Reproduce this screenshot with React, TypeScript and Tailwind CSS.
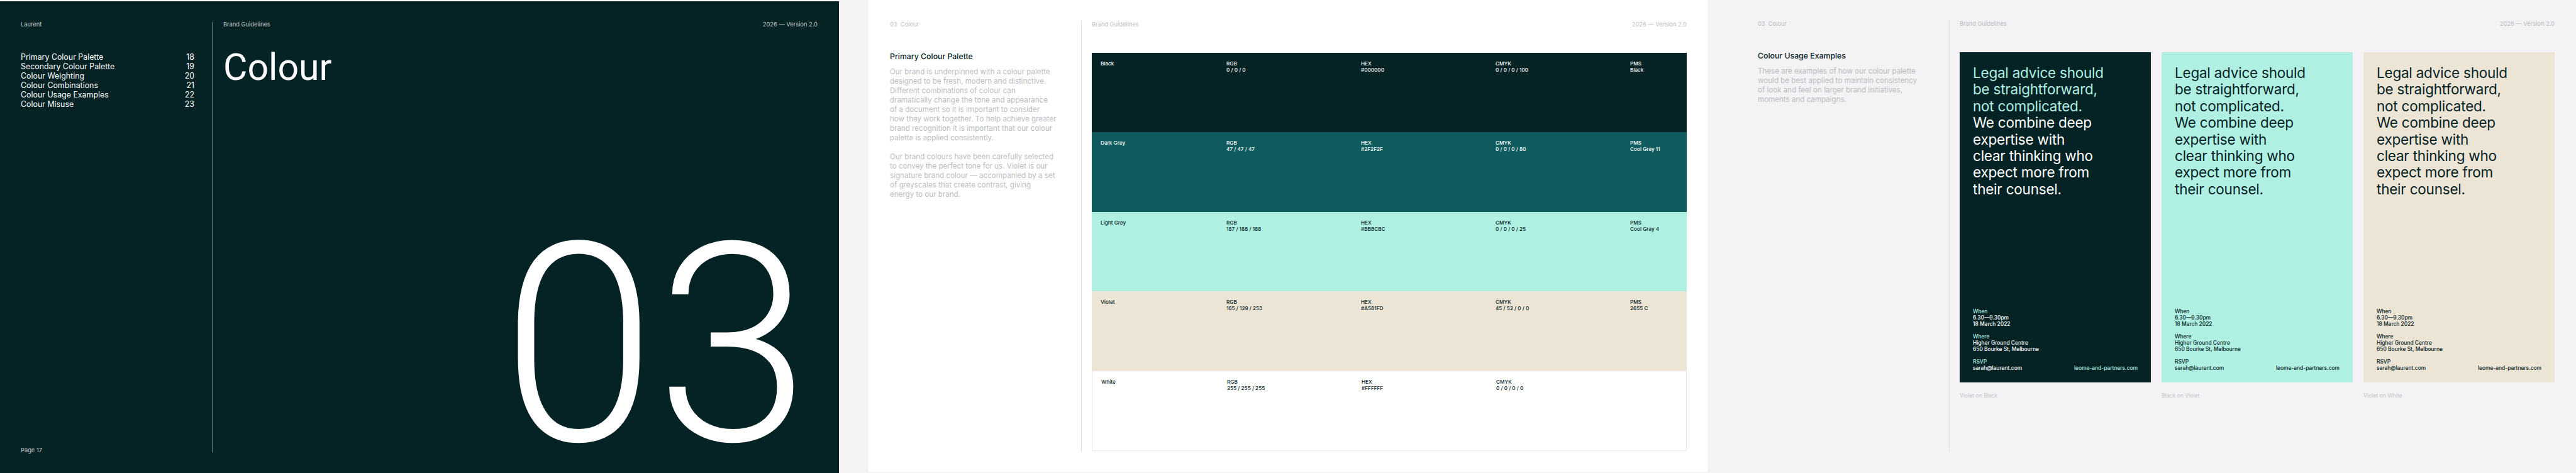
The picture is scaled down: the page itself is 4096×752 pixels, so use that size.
const swatches = [
  { name: 'Black', rgb: '0 / 0 / 0', hex: '#000000', cmyk: '0 / 0 / 0 / 100', pms: 'Black', row: 'bg-[#052225] text-white' },
  { name: 'Dark Grey', rgb: '47 / 47 / 47', hex: '#2F2F2F', cmyk: '0 / 0 / 0 / 80', pms: 'Cool Gray 11', row: 'bg-[#0f5b5d] text-white' },
  { name: 'Light Grey', rgb: '187 / 188 / 188', hex: '#BBBCBC', cmyk: '0 / 0 / 0 / 25', pms: 'Cool Gray 4', row: 'bg-[#aff0e3] text-[#052225]' },
  { name: 'Violet', rgb: '165 / 129 / 253', hex: '#A581FD', cmyk: '45 / 52 / 0 / 0', pms: '2655 C', row: 'bg-[#ece4d4] text-[#052225]' },
  { name: 'White', rgb: '255 / 255 / 255', hex: '#FFFFFF', cmyk: '0 / 0 / 0 / 0', pms: '', row: 'bg-white text-[#052225] border border-t-0 border-[#e8e6ea]' },
];

const contents = [
  ['Primary Colour Palette', '18'],
  ['Secondary Colour Palette', '19'],
  ['Colour Weighting', '20'],
  ['Colour Combinations', '21'],
  ['Colour Usage Examples', '22'],
  ['Colour Misuse', '23'],
];

const cards = [
  { bg: 'bg-[#052225] text-white', accent: 'text-[#aff0e3]', caption: 'Violet on Black' },
  { bg: 'bg-[#aff0e3] text-[#052225]', accent: 'text-[#052225]', caption: 'Black on Violet' },
  { bg: 'bg-[#ece4d4] text-[#052225]', accent: 'text-[#052225]', caption: 'Violet on White' },
];

function Cell({ label, value }: { label: string; value: string }) {
  return (
    <div className="w-[214px] shrink-0 text-[8.2px] leading-[10px] font-medium">
      <div>{label}</div>
      <div>{value}</div>
    </div>
  );
}

function TopRight({ muted }: { muted?: boolean }) {
  return (
    <div className={`flex justify-between text-[9.3px] ${muted ? 'leading-[10px] text-[#bcbcc0]' : 'leading-[8px] text-[#c9d0d0]'}`}>
      <span>Brand Guidelines</span>
      <span>2026 — Version 2.0</span>
    </div>
  );
}

function CoverPage() {
  return (
    <div className="w-[1334px] shrink-0 border-t-2 border-white">
      <div className="h-[750px] bg-[#052225] pl-[33px] pr-[34px] pt-[33px] pb-[33px]">
        <div className="flex h-full">
          <div className="flex w-[305px] shrink-0 flex-col border-r border-[#6f8486] pr-[28px]">
            <div className="text-[9.3px] leading-[8px] text-[#c9d0d0]">Laurent</div>
            <div className="mt-[39.5px] text-[12.4px] leading-[15px] text-white">
              {contents.map(([title, page]) => (
                <div key={title} className="flex justify-between">
                  <span>{title}</span>
                  <span>{page}</span>
                </div>
              ))}
            </div>
            <div className="mt-auto -mb-[2px] text-[9.3px] leading-[10px] text-[#c9d0d0]">Page 17</div>
          </div>
          <div className="flex min-w-0 flex-1 flex-col pl-[17px]">
            <TopRight />
            <div className="mt-[34px] font-['Roboto',sans-serif] text-[59px] leading-[60px] text-white">Colour</div>
            <div className="mt-auto -mb-[30px] self-end pr-[12px] font-['Roboto',sans-serif] text-[442px] leading-[400px] font-[350] text-white">
              03
            </div>
          </div>
        </div>
      </div>
    </div>
  );
}

function SideText({ title, children }: { title: string; children: React.ReactNode }) {
  return (
    <div className="mt-[38px]">
      <h2 className="text-[12.3px] leading-[15px] font-medium text-[#052225]">{title}</h2>
      <div className="mt-[10px] space-y-[15px] text-[11.6px] leading-[15px] whitespace-nowrap text-[#bcbcc0]">{children}</div>
    </div>
  );
}

function PalettePage() {
  return (
    <div className="h-[750px] w-[1334px] shrink-0 bg-white pl-[34px] pr-[33px] pt-[33px] pb-[32px]">
      <div className="flex h-full">
        <div className="w-[305px] shrink-0 border-r border-[#dddde0]">
          <div className="pt-[1px] text-[9.3px] leading-[10px] text-[#bcbcc0]">03&nbsp; Colour</div>
          <SideText title="Primary Colour Palette">
            <p>
              Our brand is underpinned with a colour palette
              <br />
              designed to be fresh, modern and distinctive.
              <br />
              Different combinations of colour can
              <br />
              dramatically change the tone and appearance
              <br />
              of a document so it is important to consider
              <br />
              how they work together. To help achieve greater
              <br />
              brand recognition it is important that our colour
              <br />
              palette is applied consistently.
            </p>
            <p>
              Our brand colours have been carefully selected
              <br />
              to convey the perfect tone for us. Violet is our
              <br />
              signature brand colour — accompanied by a set
              <br />
              of greyscales that create contrast, giving
              <br />
              energy to our brand.
            </p>
          </SideText>
        </div>
        <div className="flex min-w-0 flex-1 flex-col pl-[16px]">
          <div className="pt-[1px]">
            <TopRight muted />
          </div>
          <div className="mt-[40px] mb-[1px] flex flex-1 flex-col">
            {swatches.map((s) => (
              <div key={s.name} className={`flex flex-1 pt-[12px] pl-[14px] ${s.row}`}>
                <div className="w-[200px] shrink-0 text-[8.2px] leading-[10px] font-medium">{s.name}</div>
                <Cell label="RGB" value={s.rgb} />
                <Cell label="HEX" value={s.hex} />
                <Cell label="CMYK" value={s.cmyk} />
                {s.pms && (
                  <div className="min-w-0 flex-1 text-[8.2px] leading-[10px] font-medium">
                    <div>PMS</div>
                    <div>{s.pms}</div>
                  </div>
                )}
              </div>
            ))}
          </div>
        </div>
      </div>
    </div>
  );
}

function ExampleCard({ bg, accent, caption }: { bg: string; accent: string; caption: string }) {
  return (
    <div className="flex w-[304px] shrink-0 flex-col">
      <div className={`flex h-[525px] flex-col justify-between px-[21px] pt-[20px] pb-[18px] ${bg}`}>
        <div className="text-[22.5px] leading-[26.4px] tracking-[-0.01em]">
          <div className={accent}>
            Legal advice should
            <br />
            be straightforward,
            <br />
            not complicated.
          </div>
          We combine deep
          <br />
          expertise with
          <br />
          clear thinking who
          <br />
          expect more from
          <br />
          their counsel.
        </div>
        <div className="flex items-end justify-between text-[8.4px] leading-[10px] font-medium">
          <div>
            <div className={accent}>When</div>
            <div>6.30—9.30pm</div>
            <div>18 March 2022</div>
            <div className={`mt-[10px] ${accent}`}>Where</div>
            <div>Higher Ground Centre</div>
            <div>650 Bourke St, Melbourne</div>
            <div className={`mt-[10px] ${accent}`}>RSVP</div>
            <div>sarah@laurent.com</div>
          </div>
          <div className={accent}>leome-and-partners.com</div>
        </div>
      </div>
      <div className="mt-[16px] text-[8.6px] leading-[10px] text-[#c4c4c8]">{caption}</div>
    </div>
  );
}

function UsagePage() {
  return (
    <div className="h-[751px] w-[1333px] shrink-0 pl-[32px] pr-[34px] pt-[32px] pb-[33px]">
      <div className="flex h-full">
        <div className="w-[305px] shrink-0 border-r border-[#dddde0]">
          <div className="pt-[1px] text-[9.3px] leading-[10px] text-[#bcbcc0]">03&nbsp; Colour</div>
          <SideText title="Colour Usage Examples">
            <p>
              These are examples of how our colour palette
              <br />
              would be best applied to maintain consistency
              <br />
              of look and feel on larger brand initiatives,
              <br />
              moments and campaigns.
            </p>
          </SideText>
        </div>
        <div className="flex min-w-0 flex-1 flex-col pl-[16px]">
          <div className="pt-[1px]">
            <TopRight muted />
          </div>
          <div className="mt-[40px] flex justify-between">
            {cards.map((c) => (
              <ExampleCard key={c.bg} {...c} />
            ))}
          </div>
        </div>
      </div>
    </div>
  );
}

export default function App() {
  return (
    <div className="flex h-[752px] w-[4096px] overflow-hidden bg-[#f4f2f5] font-['Inter',sans-serif]">
      <CoverPage />
      <div className="w-[47px] shrink-0" />
      <PalettePage />
      <div className="w-[48px] shrink-0" />
      <UsagePage />
    </div>
  );
}
